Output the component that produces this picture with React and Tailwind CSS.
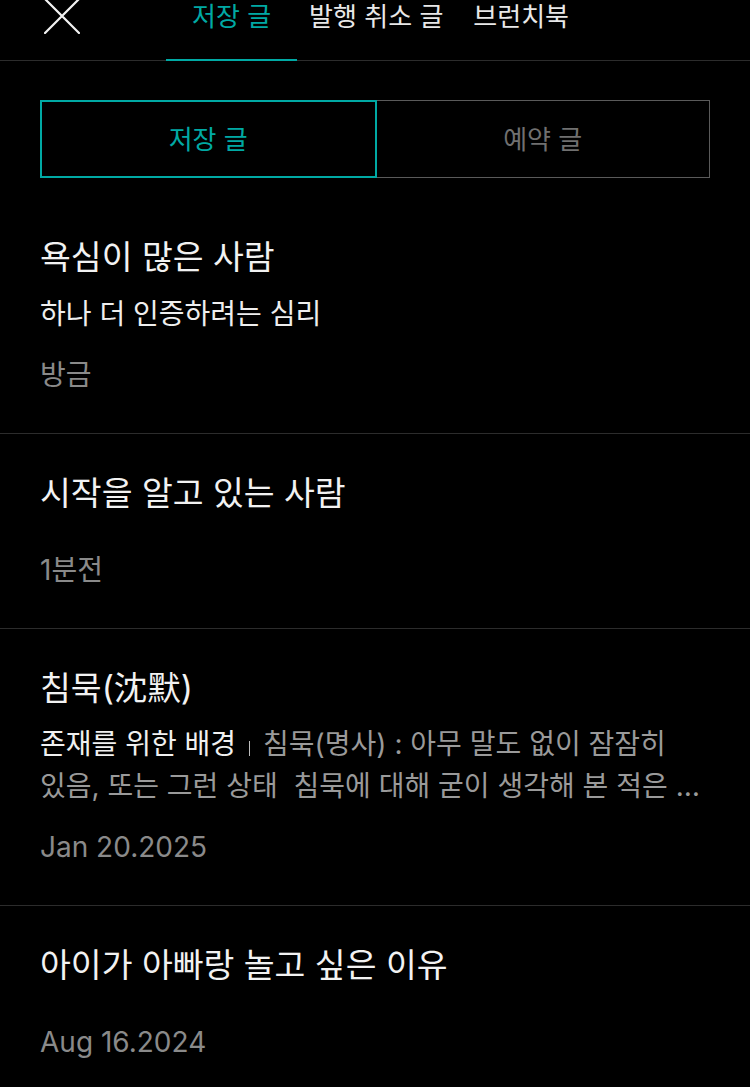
import React from "react";

const FONT = { fontFamily: 'Inter, "Noto Sans CJK KR", "Noto Sans", sans-serif' };

function CloseIcon() {
  return (
    <svg viewBox="0 0 36 36" className="w-[36px] h-[36px] -mt-[2px] ml-[44px] shrink-0" fill="none">
      <path d="M1 1 L35 35 M35 1 L1 35" stroke="#f2f2f2" strokeWidth="2.2" strokeLinecap="square" />
    </svg>
  );
}

function Header() {
  return (
    <div className="flex items-stretch h-[61px] border-b border-[#2c2c2c]">
      <CloseIcon />
      <div className="flex items-stretch ml-[86px]">
        <div className="-mb-px border-b-2 border-[#00a9a4] px-[26px] text-[26px] leading-[34px] text-[#00a9a4]">
          저장 글
        </div>
        <div className="ml-[12px] text-[26px] leading-[34px] text-[#e8e8e8]">발행 취소 글</div>
        <div className="ml-[30px] text-[26px] leading-[34px] text-[#e8e8e8]">브런치북</div>
      </div>
    </div>
  );
}

function Segments() {
  return (
    <div className="mx-[40px] mt-[39px] flex h-[78px]">
      <div className="flex-1 flex items-center justify-center border-2 border-[#00a9a4] text-[26px] text-[#00a9a4]">
        저장 글
      </div>
      <div className="flex-1 flex items-center justify-center border border-l-0 border-[#5a5a5a] text-[26px] text-[#707070]">
        예약 글
      </div>
    </div>
  );
}

const posts = [
  { title: "욕심이 많은 사람", sub: "하나 더 인증하려는 심리", date: "방금" },
  { title: "시작을 알고 있는 사람", date: "1분전" },
  {
    title: "침묵(沈默)",
    lead: "존재를 위한 배경",
    excerpt: ["침묵(명사) : 아무 말도 없이 잠잠히", "있음, 또는 그런 상태  침묵에 대해 굳이 생각해 본 적은 없었다. 말이 없는 시간은 그저 비어 있는 것이라 여겼다."],
    date: "Jan 20.2025",
  },
  { title: "아이가 아빠랑 놀고 싶은 이유", date: "Aug 16.2024" },
];

function PostItem({ post, last }) {
  return (
    <div className={`px-[40px] pt-[37px] pb-[40px] ${last ? "" : "border-b border-[#2c2c2c]"}`}>
      <div className="text-[33.5px] leading-[44px] text-[#f2f2f2]">{post.title}</div>
      {post.sub && (
        <div className="mt-[14px] text-[28px] leading-[42px] text-[#eeeeee]">{post.sub}</div>
      )}
      {post.excerpt && (
        <div className="mt-[13px] text-[28px] leading-[42px] text-[#9a9a9a] line-clamp-2 whitespace-pre-wrap">
          <span className="text-[#f0f0f0]">{post.lead}</span>
          <span className="inline-block w-px h-[15px] bg-[#bdbdbd] mx-[13px] align-[-2px]" />
          {post.excerpt[0]}
          <br />
          {post.excerpt[1]}
        </div>
      )}
      <div
        className={`${post.sub || post.excerpt ? "mt-[22px]" : "mt-[37px]"} text-[28px] leading-[36px] text-[#8a8a8a]`}
      >
        {post.date}
      </div>
    </div>
  );
}

export default function App() {
  return (
    <div className="min-h-[1087px] bg-black overflow-hidden" style={FONT}>
      <Header />
      <Segments />
      <div className="mt-[20px]">
        {posts.map((p, i) => (
          <PostItem key={i} post={p} last={i === posts.length - 1} />
        ))}
      </div>
    </div>
  );
}
